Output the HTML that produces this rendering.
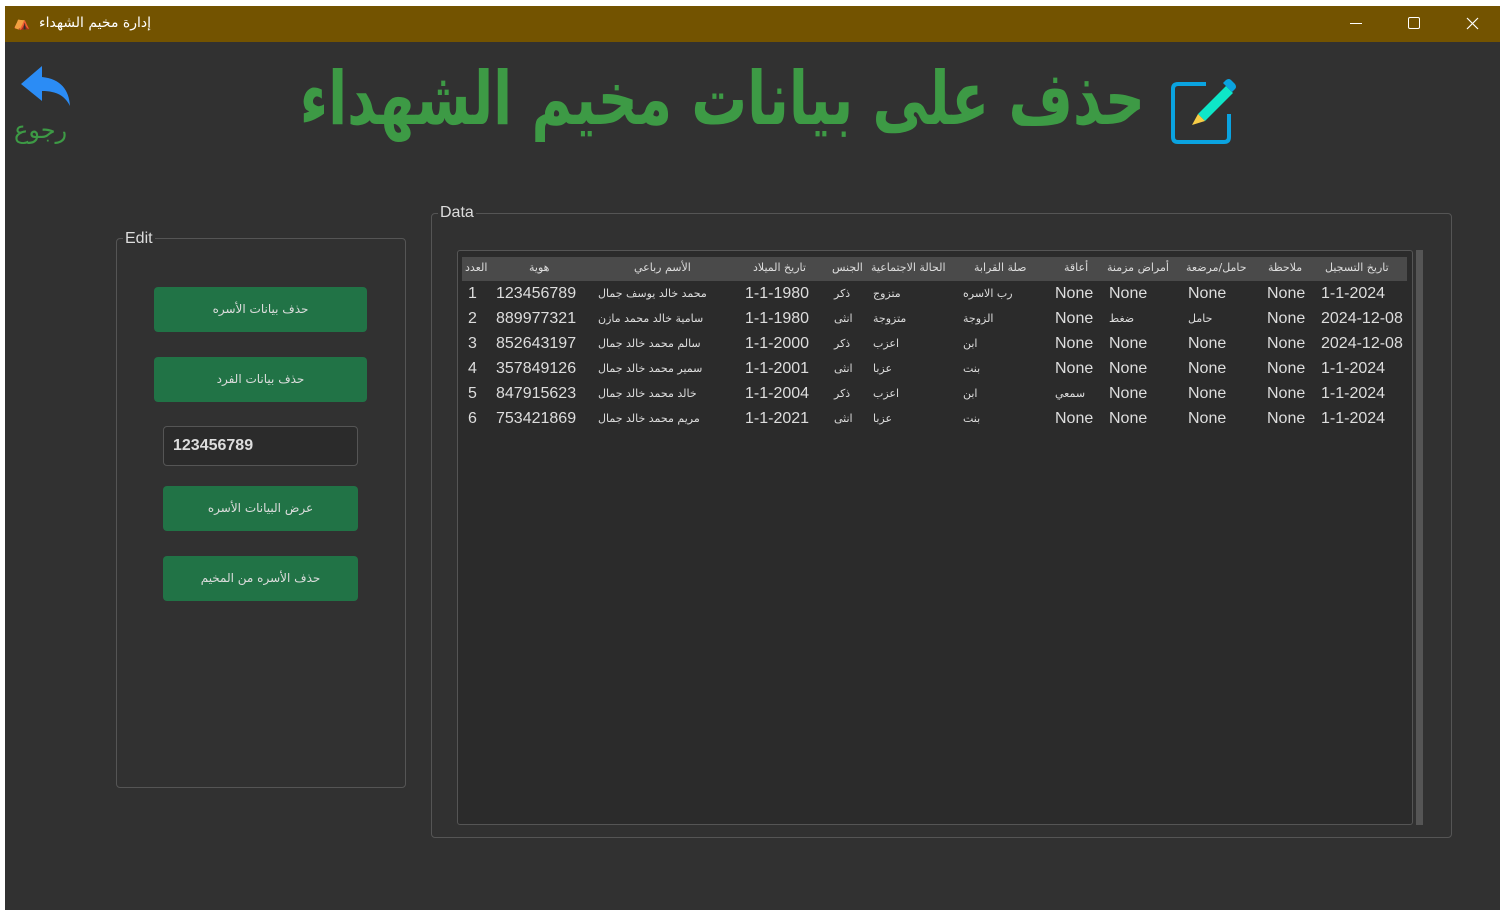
<!DOCTYPE html>
<html><head><meta charset="utf-8"><style>
*{margin:0;padding:0;box-sizing:border-box}
body{width:1503px;height:916px;background:#fff;position:relative;overflow:hidden;font-family:"Liberation Sans","DejaVu Sans",sans-serif}
.win{position:absolute;left:5px;top:6px;width:1495px;height:904px;background:#313131}
.tb{position:absolute;left:0;top:0;width:1495px;height:36px;background:#735300;color:#fff}
.a{position:absolute;white-space:nowrap}
.gb{position:absolute;border:1px solid #555;border-radius:4px}
.btn{position:absolute;background:#217346;border-radius:4px;color:#ddd;font-size:12px;font-family:"DejaVu Sans",sans-serif;text-align:center}
.t{position:absolute;font-size:16px;color:#ddd;white-space:nowrap}
.ar{font-family:"DejaVu Sans",sans-serif;font-size:11px}
.h{position:absolute;font-family:"DejaVu Sans",sans-serif;font-size:11px;color:#ddd;white-space:nowrap;top:8px}
</style></head><body>
<div class="win">
 <div class="tb">
  <div class="a" style="left:8px;top:8px;font-size:14px">⛺</div>
  <div class="a" style="left:34px;top:9px;font-size:14px;font-family:'DejaVu Sans',sans-serif">إدارة مخيم الشهداء</div>
  <div class="a" style="left:1345px;top:17px;width:12px;height:1px;background:#fff"></div>
  <div class="a" style="left:1403px;top:11px;width:12px;height:12px;border:1px solid #fff;border-radius:2px"></div>
  <svg class="a" style="left:1461px;top:11px" width="13" height="13"><path d="M1 1L12 12M12 1L1 12" stroke="#fff" stroke-width="1.2"/></svg>
 </div>
 <svg class="a" style="left:10px;top:54px" width="60" height="50" viewBox="0 0 60 50"><path d="M27 6L6 24L27 41V31C42 31 50 36 55 46C54 30 46 19 27 17Z" fill="#2b8cf5"/></svg>
 <div class="a" style="left:9px;top:110px;font-size:24px;color:#3d9a45;font-family:'DejaVu Sans',sans-serif">رجوع</div>
 <div class="a" style="right:355px;top:50px;font-size:74px;font-weight:bold;color:#3d9a45;font-family:'DejaVu Sans',sans-serif;direction:rtl;transform:scaleX(0.75);transform-origin:right top">حذف على بيانات مخيم الشهداء</div>
 <svg class="a" style="left:1163px;top:68px" width="70" height="72" viewBox="0 0 70 72"><path d="M38 10H10Q5 10 5 15V63Q5 68 10 68H56Q61 68 61 63V40" fill="none" stroke="#0aa3e0" stroke-width="4"/><path d="M30 40L58 12L65 19L37 47Z" fill="#0ee6c8"/><path d="M55 9L58 6Q61 4 63 6L67 10Q69 13 67 15L64 18Z" fill="#0aa3e0"/><path d="M30 40L37 47L24 51Z" fill="#f7cd46"/></svg>

 <div class="gb" style="left:111px;top:232px;width:290px;height:550px"></div>
 <div class="a" style="left:118px;top:224px;font-size:16px;color:#ddd;background:#313131;padding:0 2px">Edit</div>
 <div class="btn" style="left:149px;top:281px;width:213px;height:45px;line-height:45px">حذف بيانات الأسره</div>
 <div class="btn" style="left:149px;top:351px;width:213px;height:45px;line-height:45px">حذف بيانات الفرد</div>
 <div class="a" style="left:158px;top:420px;width:195px;height:40px;border:1px solid #555;border-radius:4px;background:#2b2b2b;color:#ddd;font-size:16px;font-weight:bold;padding:10px 9px">123456789</div>
 <div class="btn" style="left:158px;top:480px;width:195px;height:45px;line-height:45px">عرض البيانات الأسره</div>
 <div class="btn" style="left:158px;top:550px;width:195px;height:45px;line-height:45px">حذف الأسره من المخيم</div>

 <div class="gb" style="left:426px;top:207px;width:1021px;height:625px"></div>
 <div class="a" style="left:433px;top:198px;font-size:16px;color:#ddd;background:#313131;padding:0 2px">Data</div>
 <div class="a" style="left:452px;top:244px;width:956px;height:575px;border:1px solid #555;border-radius:3px;background:#2b2b2b">
  <div class="a" style="left:4px;top:6px;width:945px;height:24px;background:#4a4a4a">
   <span class="h" style="left:3px;top:4px">العدد</span>
   <span class="h" style="left:67px;top:4px">هوية</span>
   <span class="h" style="left:172px;top:4px">الأسم رباعي</span>
   <span class="h" style="left:291px;top:4px">تاريخ الميلاد</span>
   <span class="h" style="left:370px;top:4px">الجنس</span>
   <span class="h" style="left:409px;top:4px">الحالة الاجتماعية</span>
   <span class="h" style="left:512px;top:4px">صلة القرابة</span>
   <span class="h" style="left:602px;top:4px">أعاقة</span>
   <span class="h" style="left:645px;top:4px">أمراض مزمنة</span>
   <span class="h" style="left:724px;top:4px">حامل/مرضعة</span>
   <span class="h" style="left:806px;top:4px">ملاحظة</span>
   <span class="h" style="left:863px;top:4px">تاريخ التسجيل</span>
  </div>
 </div>
 <div class="a" style="left:1411px;top:244px;width:7px;height:575px;background:#555"></div>
 <div id="rows"></div>
</div>
<script>
var d=[["1","123456789","محمد خالد يوسف جمال","1-1-1980","ذكر","متزوج","رب الاسره","None","None","None","None","1-1-2024"],
["2","889977321","سامية خالد محمد مازن","1-1-1980","انثى","متزوجة","الزوجة","None","ضغط","حامل","None","2024-12-08"],
["3","852643197","سالم محمد خالد جمال","1-1-2000","ذكر","اعزب","ابن","None","None","None","None","2024-12-08"],
["4","357849126","سمير محمد خالد جمال","1-1-2001","انثى","عزبا","بنت","None","None","None","None","1-1-2024"],
["5","847915623","خالد محمد خالد جمال","1-1-2004","ذكر","اعزب","ابن","سمعي","None","None","None","1-1-2024"],
["6","753421869","مريم محمد خالد جمال","1-1-2021","انثى","عزبا","بنت","None","None","None","None","1-1-2024"]];
var x=[463,491,593,740,829,868,958,1050,1104,1183,1262,1316];
var h="";
d.forEach(function(r,i){var y=279+i*25;r.forEach(function(c,j){var ar=/[\u0600-\u06FF]/.test(c);h+='<div class="t'+(ar?' ar':'')+'" style="left:'+x[j]+'px;top:'+(y+(ar?2:0))+'px">'+c+'</div>';});});
document.getElementById("rows").innerHTML=h;
</script>
</body></html>
